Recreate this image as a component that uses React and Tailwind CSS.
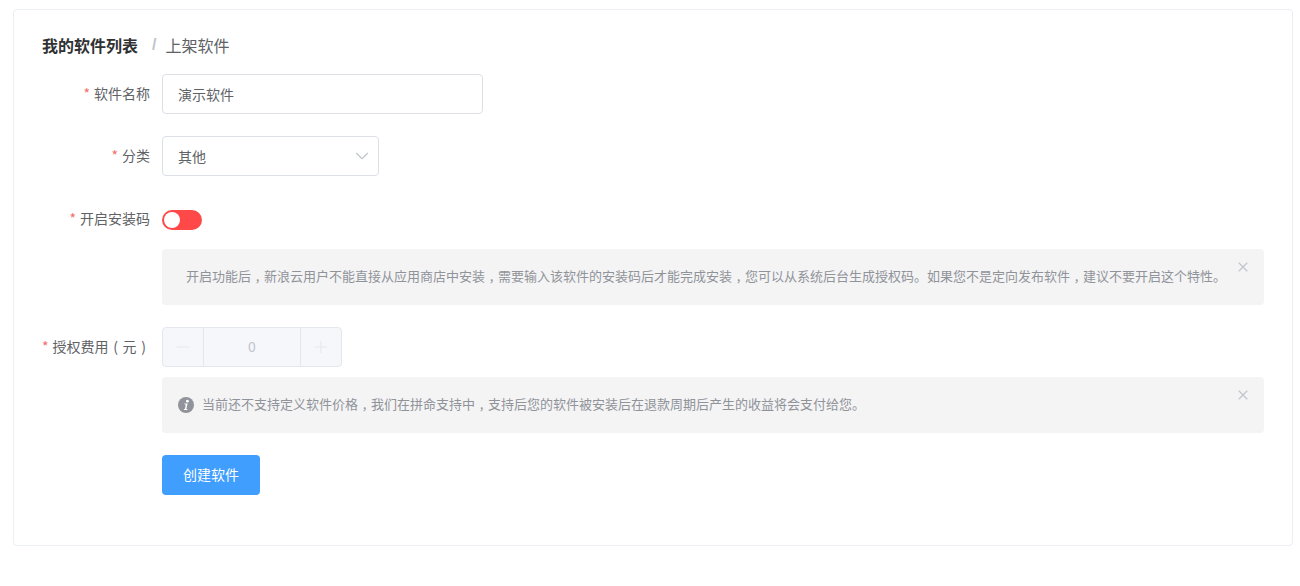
import { Fragment } from "react";
import { ChevronDown, X, Minus, Plus } from "lucide-react";

// the reference draws these punctuation marks centred in their full-width cell
function Punct({ children }) {
  return <span className="inline-block w-[1em] text-center">{children}</span>;
}

function WithCommas({ text }) {
  const parts = text.split("，");
  return parts.map((part, i) => (
    <Fragment key={i}>
      {part}
      {i < parts.length - 1 && <Punct>,</Punct>}
    </Fragment>
  ));
}

function Label({ children }) {
  return (
    <label className="w-[120px] shrink-0 whitespace-nowrap pr-3 text-right text-sm leading-[38px] text-[#606266]">
      <span className="mr-1 text-[#f56c6c]">*</span>
      {children}
    </label>
  );
}

function Alert({ children }) {
  return (
    <div className="relative ml-[120px] flex h-14 w-[1102px] items-center rounded bg-[#f4f4f5] px-4 text-[13px] text-[#909399]">
      {children}
      <X size={16} strokeWidth={1.6} className="absolute right-[13px] top-[10px] text-[#c0c4cc]" />
    </div>
  );
}

export default function App() {
  return (
    <div className="h-[586px] bg-white pl-[13px] pt-[9px] font-['Noto_Sans_CJK_SC',sans-serif]">
      <div className="h-[537px] w-[1280px] rounded border border-[#ebeef5] bg-white pl-[28px] pt-[24px]">
        <div className="flex h-[22px] items-center text-base leading-[22px]">
          <span className="font-bold text-[#303133]">我的软件列表</span>
          <span className="ml-[14px] mr-[9px] font-['Liberation_Sans',sans-serif] font-bold text-[#c0c4cc]">/</span>
          <span className="text-[#606266]">上架软件</span>
        </div>

        <div className="mt-[18px] flex h-10">
          <Label>软件名称</Label>
          <div className="flex h-10 w-[321px] items-center rounded border border-[#dcdfe6] px-[15px] pb-px text-sm text-[#606266]">
            演示软件
          </div>
        </div>

        <div className="mt-[22px] flex h-10">
          <Label>分类</Label>
          <div className="flex h-10 w-[217px] items-center justify-between rounded border border-[#dcdfe6] pl-[15px] pr-[5px] text-sm text-[#606266]">
            <span className="pb-px">其他</span>
            <ChevronDown size={22} strokeWidth={1.2} className="text-[#c0c4cc]" />
          </div>
        </div>

        <div className="mt-[23px] flex h-10">
          <Label>开启安装码</Label>
          <div className="mt-[11px] flex h-5 w-10 items-center rounded-full bg-[#ff4949] pl-0.5">
            <span className="h-4 w-4 rounded-full bg-white" />
          </div>
        </div>

        <div className="pt-[10px]">
          <Alert>
            <span className="pb-0.5 pl-2">
              <WithCommas text="开启功能后，新浪云用户不能直接从应用商店中安装，需要输入该软件的安装码后才能完成安装，您可以从系统后台生成授权码。如果您不是定向发布软件，建议不要开启这个特性。" />
            </span>
          </Alert>
        </div>

        <div className="mt-[22px] flex h-10">
          <Label>
            授权费用<Punct>(</Punct>元<Punct>)</Punct>
          </Label>
          <div className="flex h-10 w-[180px] items-center rounded border border-[#e4e7ed] bg-[#f5f7fa] text-sm text-[#c0c4cc]">
            <span className="flex h-full w-[41px] items-center justify-center border-r border-[#e4e7ed]">
              <Minus size={20} strokeWidth={1.2} className="text-[#e4e7ed]" />
            </span>
            <span className="flex-1 pb-0.5 text-center">0</span>
            <span className="flex h-full w-[41px] items-center justify-center border-l border-[#e4e7ed]">
              <Plus size={20} strokeWidth={1.2} className="text-[#e4e7ed]" />
            </span>
          </div>
        </div>

        <div className="mt-[10px]">
          <Alert>
            <svg viewBox="0 0 16 16" className="mr-2 h-4 w-4 shrink-0">
              <circle cx="8" cy="8" r="8" fill="#909399" />
              <circle cx="9.4" cy="4.2" r="1.4" fill="#fff" />
              <path d="M6.2 6.6h3.4l-1.3 5.4h1.1l-.2.9H5.8l.2-.9h.9l.9-4.5h-1z" fill="#fff" />
            </svg>
            <span className="pb-0.5">
              <WithCommas text="当前还不支持定义软件价格，我们在拼命支持中，支持后您的软件被安装后在退款周期后产生的收益将会支付给您。" />
            </span>
          </Alert>
        </div>

        <button className="ml-[120px] mt-[22px] h-10 w-[98px] rounded bg-[#409eff] pb-0.5 text-sm text-white">
          创建软件
        </button>
      </div>
    </div>
  );
}
